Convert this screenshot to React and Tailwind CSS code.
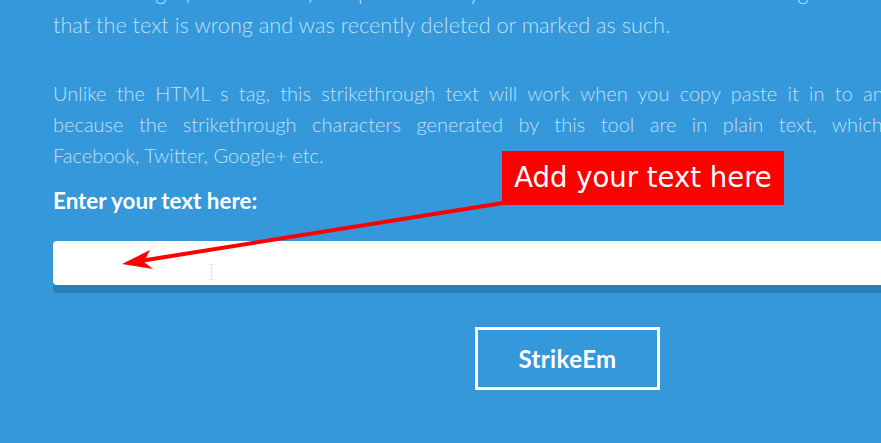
import React from "react";

const lato = { fontFamily: "Lato, 'Open Sans', sans-serif" };

const App = () => {
  return (
    <div className="relative w-[881px] h-[443px] overflow-hidden bg-[#3498db]" style={lato}>
      <div className="w-[1029px] pl-[53px]">
        {/* intro paragraph */}
        <div className="mt-[-24px] text-[21.7px] font-light leading-[33px] text-[#c2e0f4]">
          <p className="whitespace-nowrap">
            Strikethrough (aka strikeout) is represented by words with a horizontal line through their center. It implies
          </p>
          <p className="whitespace-nowrap">that the text is wrong and was recently deleted or marked as such.</p>
        </div>

        {/* second paragraph, justified */}
        <div className="mt-[36px] text-[20px] font-light leading-[31px] text-[#c2e0f4]">
          <p className="w-[885px] text-justify [text-align-last:justify]">
            Unlike the HTML s tag, this strikethrough text will work when you copy paste it in to any site,
          </p>
          <p className="w-[1032px] text-justify [text-align-last:justify]">
            because the strikethrough characters generated by this tool are in plain text, which means it works on
          </p>
          <p>Facebook, Twitter, Google+ etc.</p>
        </div>

        <label className="block mt-[18px] text-[22.4px] font-bold leading-[24px] text-white">
          Enter your text here:
        </label>

        <div className="mt-[28px] w-[1029px]">
          <input
            type="text"
            className="block w-full h-[44px] rounded-[4px] bg-white shadow-[0_8px_0_0_#2a80b9] outline-none"
          />
        </div>

        <div className="mt-[42px] flex justify-center w-[1029px]">
          <button className="w-[185px] h-[63px] border-[3px] border-white text-[24px] font-bold tracking-[0.4px] text-white">
            StrikeEm
          </button>
        </div>
      </div>

      {/* annotation: label */}
      <div
        className="absolute left-[502px] top-[151px] w-[282px] h-[54px] bg-[#ff0000] flex items-center justify-center text-white text-[27.5px]"
        style={{ fontFamily: "'DejaVu Sans', Verdana, sans-serif" }}
      >
        Add your text here
      </div>

      {/* annotation: arrow */}
      <svg className="absolute left-0 top-0" width="881" height="443" viewBox="0 0 881 443">
        <line x1="503" y1="203" x2="140" y2="261" stroke="#ff0000" strokeWidth="4" />
        <path d="M122 264 L150 250 L144 262 L153 269 Z" fill="#ff0000" />
      </svg>

      {/* mouse cursor */}
      <svg className="absolute left-[208px] top-[264px]" width="7" height="16" viewBox="0 0 7 16">
        <path d="M1 0.5 H6 M3.5 0.5 V15.5 M1 15.5 H6" stroke="#e6e6e6" strokeWidth="1" fill="none" />
      </svg>
    </div>
  );
};

export default App;
